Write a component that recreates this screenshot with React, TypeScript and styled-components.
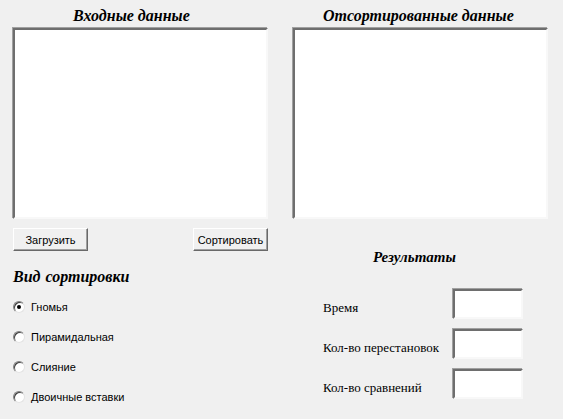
import React, { useState } from 'react';
import styled, { createGlobalStyle } from 'styled-components';

const sortKinds = ['Гномья', 'Пирамидальная', 'Слияние', 'Двоичные вставки'];
const results = ['Время', 'Кол-во перестановок', 'Кол-во сравнений'];

function App() {
  const [kind, setKind] = useState(0);

  return (
    <>
      <GlobalStyle />
      <Form>
        <Column>
          <Heading $indent={60}>Входные данные</Heading>
          <DataBox />
          <ButtonRow>
            <Button>Загрузить</Button>
            <Button>Сортировать</Button>
          </ButtonRow>
          <GroupTitle>Вид сортировки</GroupTitle>
          <RadioList>
            {sortKinds.map((name, i) => (
              <RadioRow key={name}>
                <Radio
                  type='radio'
                  name='kind'
                  checked={kind === i}
                  onChange={() => setKind(i)}
                />
                {name}
              </RadioRow>
            ))}
          </RadioList>
        </Column>
        <Column>
          <Heading $indent={30}>Отсортированные данные</Heading>
          <DataBox />
          <ResultsTitle>Результаты</ResultsTitle>
          <ResultList>
            {results.map((label) => (
              <ResultRow key={label}>
                <ResultLabel>{label}</ResultLabel>
                <ResultBox />
              </ResultRow>
            ))}
          </ResultList>
        </Column>
      </Form>
    </>
  );
}
export default App;

const GlobalStyle = createGlobalStyle`
  html, body {
    margin: 0;
    padding: 0;
    background-color: #f0f0f0;
  }
  #root {
    width: 563px;
    height: 419px;
    overflow: hidden;
  }
`;

const sunken = `
  box-sizing: border-box;
  background-color: #fff;
  border-style: solid;
  border-width: 2px;
  border-color: #6e6e6e #f8f8f8 #f8f8f8 #6e6e6e;
  box-shadow: -1px -1px 0 #a0a0a0;
  outline: none;
`;

const Form = styled.div`
  display: grid;
  grid-template-columns: 255px 255px;
  column-gap: 25px;
  padding-left: 13px;
`;

const Column = styled.div`
  display: flex;
  flex-direction: column;
`;

const Heading = styled.h1<{ $indent: number }>`
  box-sizing: border-box;
  margin: 0;
  padding: 6px 0 0 ${(props) => props.$indent}px;
  height: 28px;
  color: #000;
  font-family: 'Liberation Serif', serif;
  font-size: 16px;
  font-style: italic;
  font-weight: bold;
  line-height: 20px;
`;

const DataBox = styled.textarea`
  ${sunken}
  width: 255px;
  height: 191px;
  resize: none;
`;

const ButtonRow = styled.div`
  display: flex;
  justify-content: space-between;
  margin-top: 9px;
`;

const Button = styled.button`
  box-sizing: border-box;
  width: 75px;
  height: 23px;
  padding: 0;
  background-color: #f0f0f0;
  border-style: solid;
  border-width: 1px;
  border-color: #fff #696969 #696969 #fff;
  box-shadow: inset -1px -1px 0 #a0a0a0;
  color: #000;
  font-family: 'Liberation Sans', sans-serif;
  font-size: 11px;
`;

const GroupTitle = styled.h2`
  margin: 16px 0 0;
  color: #000;
  font-family: 'Liberation Serif', serif;
  font-size: 16px;
  font-style: italic;
  font-weight: bold;
  line-height: 20px;
  word-spacing: 1px;
`;

const RadioList = styled.div`
  display: flex;
  flex-direction: column;
  margin-top: 5px;
`;

const RadioRow = styled.label`
  display: flex;
  align-items: center;
  gap: 6px;
  height: 30px;
  color: #000;
  font-family: 'Liberation Sans', sans-serif;
  font-size: 11px;
`;

const Radio = styled.input`
  appearance: none;
  box-sizing: border-box;
  position: relative;
  margin: 0;
  width: 12px;
  height: 12px;
  background-color: #fff;
  border-radius: 50%;
  border: 1px solid;
  border-color: #808080 #e3e3e3 #e3e3e3 #808080;
  box-shadow: inset 1px 1px 0 #404040;
  &:checked::after {
    content: '';
    position: absolute;
    left: 3px;
    top: 3px;
    width: 4px;
    height: 4px;
    border-radius: 50%;
    background-color: #000;
  }
`;

const ResultsTitle = styled.h2`
  margin: 28px 0 0;
  padding-left: 80px;
  color: #000;
  font-family: 'Liberation Serif', serif;
  font-size: 15px;
  font-style: italic;
  font-weight: bold;
  line-height: 20px;
`;

const ResultList = styled.div`
  display: flex;
  flex-direction: column;
  gap: 10px;
  margin-top: 22px;
  padding-left: 30px;
`;

const ResultRow = styled.div`
  display: flex;
  align-items: center;
`;

const ResultLabel = styled.span`
  width: 130px;
  padding-top: 8px;
  color: #000;
  font-family: 'Liberation Serif', serif;
  font-size: 13px;
`;

const ResultBox = styled.input`
  ${sunken}
  width: 70px;
  height: 30px;
`;
